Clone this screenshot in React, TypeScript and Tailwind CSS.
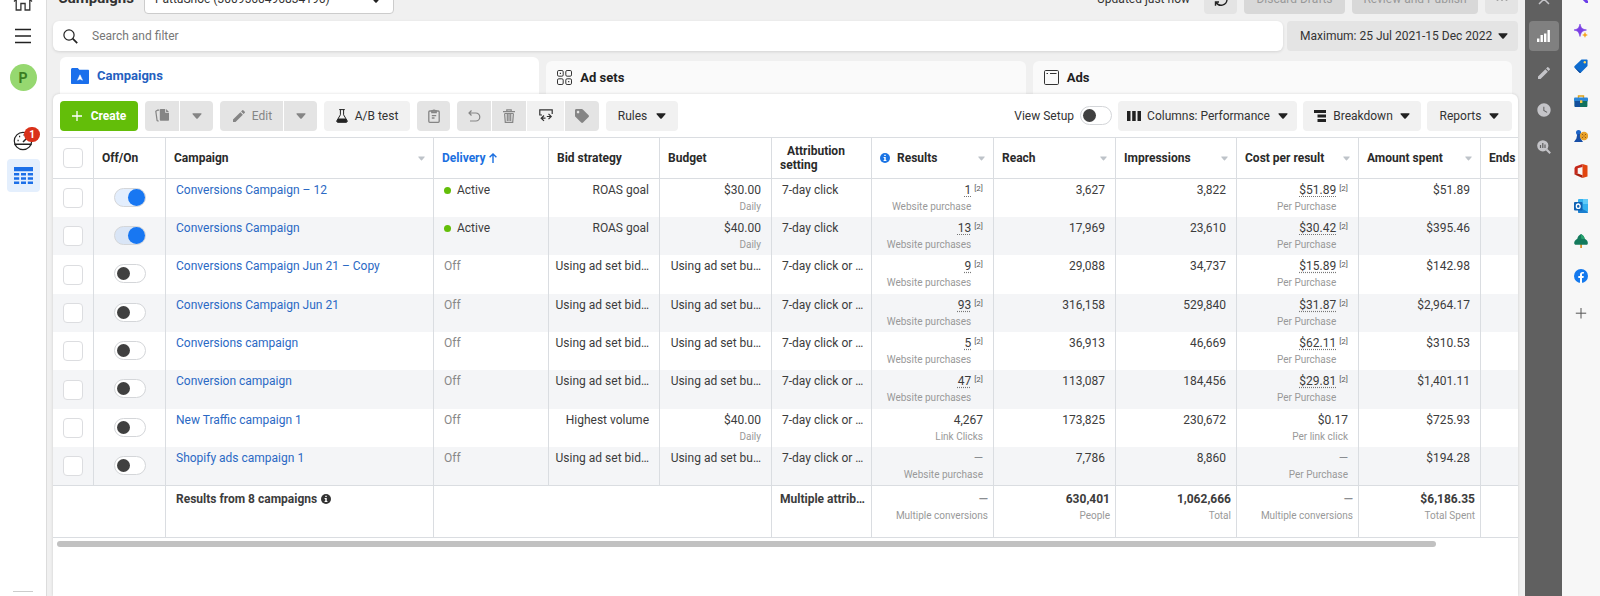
import { useState, type ReactNode } from 'react';
import { clsx } from 'clsx';
import { MdEdit, MdWatchLater } from 'react-icons/md';
import { FaTag } from 'react-icons/fa';

type CampaignRow = {
    id: number;
    name: string;
    active: boolean;
    bid: string;
    budget: string;
    budgetNote?: string;
    attribution: string;
    results: string;
    resultsNote: string;
    reach: string;
    impressions: string;
    cost: string;
    costNote: string;
    spent: string;
    footnote: boolean;
};

const BID = 'Using ad set bid…';
const BUDGET = 'Using ad set bu…';
const CLICK = '7-day click or …';

const CAMPAIGNS: CampaignRow[] = [
    { id: 1, name: 'Conversions Campaign – 12', active: true, bid: 'ROAS goal', budget: '$30.00', budgetNote: 'Daily', attribution: '7-day click', results: '1', resultsNote: 'Website purchase', reach: '3,627', impressions: '3,822', cost: '$51.89', costNote: 'Per Purchase', spent: '$51.89', footnote: true },
    { id: 2, name: 'Conversions Campaign', active: true, bid: 'ROAS goal', budget: '$40.00', budgetNote: 'Daily', attribution: '7-day click', results: '13', resultsNote: 'Website purchases', reach: '17,969', impressions: '23,610', cost: '$30.42', costNote: 'Per Purchase', spent: '$395.46', footnote: true },
    { id: 3, name: 'Conversions Campaign Jun 21 – Copy', active: false, bid: BID, budget: BUDGET, attribution: CLICK, results: '9', resultsNote: 'Website purchases', reach: '29,088', impressions: '34,737', cost: '$15.89', costNote: 'Per Purchase', spent: '$142.98', footnote: true },
    { id: 4, name: 'Conversions Campaign Jun 21', active: false, bid: BID, budget: BUDGET, attribution: CLICK, results: '93', resultsNote: 'Website purchases', reach: '316,158', impressions: '529,840', cost: '$31.87', costNote: 'Per Purchase', spent: '$2,964.17', footnote: true },
    { id: 5, name: 'Conversions campaign', active: false, bid: BID, budget: BUDGET, attribution: CLICK, results: '5', resultsNote: 'Website purchases', reach: '36,913', impressions: '46,669', cost: '$62.11', costNote: 'Per Purchase', spent: '$310.53', footnote: true },
    { id: 6, name: 'Conversion campaign', active: false, bid: BID, budget: BUDGET, attribution: CLICK, results: '47', resultsNote: 'Website purchases', reach: '113,087', impressions: '184,456', cost: '$29.81', costNote: 'Per Purchase', spent: '$1,401.11', footnote: true },
    { id: 7, name: 'New Traffic campaign 1', active: false, bid: 'Highest volume', budget: '$40.00', budgetNote: 'Daily', attribution: CLICK, results: '4,267', resultsNote: 'Link Clicks', reach: '173,825', impressions: '230,672', cost: '$0.17', costNote: 'Per link click', spent: '$725.93', footnote: false },
    { id: 8, name: 'Shopify ads campaign 1', active: false, bid: BID, budget: BUDGET, attribution: CLICK, results: '—', resultsNote: 'Website purchase', reach: '7,786', impressions: '8,860', cost: '—', costNote: 'Per Purchase', spent: '$194.28', footnote: false },
];

function Caret({ small, className }: { small?: boolean; className?: string }) {
    return (
        <svg
            viewBox="0 0 10 6"
            className={clsx('shrink-0', small ? 'h-[5px] w-[7px]' : 'h-[6px] w-[10px]', className)}
            fill="currentColor"
            aria-hidden="true"
        >
            <path d="M1 .3h8c.6 0 .8.6.4 1L5.7 5.4a1 1 0 0 1-1.4 0L.6 1.3C.2.9.4.3 1 .3z" />
        </svg>
    );
}

function InfoIcon({ className }: { className?: string }) {
    return (
        <svg viewBox="0 0 12 12" className={clsx('h-[10px] w-[10px] shrink-0', className)} aria-hidden="true">
            <circle cx="6" cy="6" r="6" fill="currentColor" />
            <path d="M5.1 2h1.8v1.6H5.1zM4.3 4.7h2.6v3.6h.8v1.2H4.3V8.3h.8V5.9h-.8z" fill="#fff" />
        </svg>
    );
}

function Switch({ on, label, onChange }: { on: boolean; label: string; onChange: () => void }) {
    return (
        <input
            type="checkbox"
            role="switch"
            aria-label={label}
            checked={on}
            onChange={onChange}
            className={clsx(
                "flex h-[19px] w-8 shrink-0 appearance-none items-center rounded-full border border-[#d4d6d9] before:rounded-full before:content-['']",
                on
                    ? 'justify-end bg-[#1877f2]/12 before:size-[17px] before:bg-[#1877f2]'
                    : 'justify-start bg-white pl-[2px] before:size-[13px] before:bg-[#404040]'
            )}
        />
    );
}

function Tick({ label }: { label: string }) {
    return (
        <input
            type="checkbox"
            aria-label={label}
            className="mx-auto block size-5 appearance-none rounded border border-[#dcdde0] bg-white checked:border-[#1877f2] checked:bg-[#1877f2]"
        />
    );
}

function ToolButton({ className, muted, label, children }: { className?: string; muted?: boolean; label?: string; children: ReactNode }) {
    return (
        <button
            type="button"
            aria-label={label}
            className={clsx(
                'flex h-[30px] items-center justify-center whitespace-nowrap',
                muted ? 'bg-[#e4e4e4] text-[#858585]' : 'bg-[#f1f1f1] text-[#333]',
                className
            )}
        >
            {children}
        </button>
    );
}

function HeadCell({ children, sortable, className }: { children: ReactNode; sortable?: boolean; className?: string }) {
    return (
        <th scope="col" className={clsx('h-[41px] border-r border-b border-[#dadde1] px-2 text-left font-bold', className)}>
            <div className="flex items-center justify-between">
                <span className="flex items-center">{children}</span>
                {sortable && <Caret small className="text-[#bec3c9]" />}
            </div>
        </th>
    );
}

function Metric({ value, note, footnote }: { value: string; note?: string; footnote?: boolean }) {
    return (
        <div className="flex justify-end gap-[3px]">
            <div className="text-right whitespace-nowrap">
                <p className={clsx(footnote && 'underline decoration-[#777] decoration-dotted underline-offset-2', value === '—' && 'text-[#8a8d91]')}>
                    {value}
                </p>
                {note && <p className="mt-[3px] text-[10px] font-normal text-[#999]">{note}</p>}
            </div>
            {footnote && <span className="text-[8px] leading-[12px] text-[#555]">[2]</span>}
        </div>
    );
}

function LeftNav() {
    return (
        <nav className="-mt-2 flex w-[47px] shrink-0 flex-col items-center border-r border-[#dcdcdc] bg-white">
            <a href="#home" aria-label="Home">
                <svg viewBox="0 0 20 20" className="size-5" fill="none" stroke="#333" strokeWidth="1.3">
                    <path d="M1 9.5 10 1l9 8.5M3.2 8v10h4.7v-6.5h4.2V18h4.7V8" />
                </svg>
            </a>
            <button type="button" aria-label="All tools" className="mt-[14px]">
                <svg viewBox="0 0 16 20" className="h-5 w-4" stroke="#222" strokeWidth="1.6">
                    <path d="M0 3.5h16M0 10h16M0 16.5h16" />
                </svg>
            </button>
            <button type="button" className="mt-[18px] size-[27px] rounded-full bg-[#96d870] text-sm font-bold text-[#3a7d22]">
                P
            </button>
            <button type="button" aria-label="Account notices" className="relative mt-[39px] flex size-[22px] items-center justify-center">
                <svg viewBox="0 0 20 20" className="size-5" fill="none" stroke="#222" strokeWidth="1.2">
                    <circle cx="10" cy="10" r="8.7" />
                    <path d="M1.5 13.2h17M10 11l4-4" strokeWidth="1.5" />
                    <path d="M4.5 9.5h1.2M6 5.5h1.2M10.5 4h1.2" strokeWidth="1.5" />
                </svg>
                <span className="absolute -top-[3px] left-3 flex h-[15px] w-4 items-center justify-center rounded-full bg-[#d9311a] text-[10px] font-bold text-white">
                    1
                </span>
            </button>
            <a href="#ads-manager" aria-label="Ads Manager" className="mt-[7px] flex size-[33px] items-center justify-center rounded bg-[#e4effd]">
                <svg viewBox="0 0 19 17" className="h-[17px] w-[19px]" fill="#1b6fe8">
                    <path d="M0 0h19v4.3H0zM0 6h5.2v2.5H0zM7 6h5v2.5H7zM13.8 6H19v2.5h-5.2zM0 10.2h5.2v2.5H0zM7 10.2h5v2.5H7zM13.8 10.2H19v2.5h-5.2zM0 14.4h5.2v2.5H0zM7 14.4h5v2.5H7zM13.8 14.4H19v2.5h-5.2z" />
                </svg>
            </a>
            <div className="mt-auto mb-1 h-px w-5 bg-[#ccc]" />
        </nav>
    );
}

function TopBar() {
    return (
        <header className="-mt-4 flex h-[30px] items-center">
            <h1 className="pl-[5px] text-[15px] font-bold text-[#333]">Campaigns</h1>
            <div className="relative ml-[10px] w-[250px]">
                <select aria-label="Ad account" className="h-[30px] w-full appearance-none rounded border border-[#ccc] bg-white pl-[10px] text-[#333]">
                    <option>PattuShoe (3009560496834196)</option>
                </select>
                <Caret className="pointer-events-none absolute top-[13px] right-[13px] text-[#222]" />
            </div>
            <span className="mr-[14px] ml-auto text-[#333]">Updated just now</span>
            <button type="button" aria-label="Refresh" className="flex h-[30px] w-[33px] items-center justify-center rounded bg-[#e4e4e4]">
                <svg viewBox="0 0 16 16" className="size-4" fill="none" stroke="#222" strokeWidth="1.4">
                    <path d="M2 7a6 6 0 0 1 11-2.5M14 9a6 6 0 0 1-11 2.5M13.5 1.5v3.5H10M2.5 14.8V11H6" />
                </svg>
            </button>
            <button type="button" disabled className="ml-[7px] h-[30px] w-[101px] rounded bg-[#d8d8d8] text-[#999]">
                Discard Drafts
            </button>
            <button type="button" disabled className="ml-[7px] h-[30px] w-[126px] rounded bg-[#d8d8d8] text-[#999]">
                Review and Publish
            </button>
            <button type="button" aria-label="More" className="ml-[7px] flex h-[30px] w-[33px] items-center justify-center rounded bg-[#e4e4e4]">
                <svg viewBox="0 0 12 3" className="h-[3px] w-3" fill="#888">
                    <circle cx="1.5" cy="1.5" r="1.2" />
                    <circle cx="6" cy="1.5" r="1.2" />
                    <circle cx="10.5" cy="1.5" r="1.2" />
                </svg>
            </button>
        </header>
    );
}

function SearchRow() {
    return (
        <div className="mt-[7px] flex gap-1">
            <label className="flex h-[30px] flex-1 items-center rounded-md bg-white pl-[10px] shadow-[0_1px_3px_rgba(0,0,0,0.12)]">
                <svg viewBox="0 0 15 15" className="size-[15px]" fill="none" stroke="#222" strokeWidth="1.2">
                    <circle cx="6" cy="6" r="5.1" />
                    <path d="m9.7 9.7 4.5 4.5" strokeWidth="1.7" />
                </svg>
                <input type="text" aria-label="Search and filter" placeholder="Search and filter" className="ml-[14px] flex-1 outline-none placeholder:text-[#777]" />
            </label>
            <button type="button" className="flex h-[30px] w-[231px] items-center justify-between rounded bg-[#e4e4e4] pr-[10px] pl-[13px] text-[#333]">
                Maximum: 25 Jul 2021-15 Dec 2022
                <Caret className="text-[#222]" />
            </button>
        </div>
    );
}

function LevelTabs() {
    const tab = 'flex flex-1 items-center rounded-t-md px-[11px] text-[13px] font-bold';
    return (
        <div role="tablist" className="mt-[6px] flex h-[37px] items-end gap-[7px] pr-[6px] pl-[7px]">
            <button type="button" role="tab" aria-selected="true" className={clsx(tab, 'h-[37px] bg-white text-[#2460bf]')}>
                <svg viewBox="0 0 18 16" className="mr-2 h-4 w-[18px]">
                    <path d="M1.5 0h5.3l1.5 1.7H17c.6 0 1 .4 1 1V15c0 .6-.4 1-1 1H1c-.6 0-1-.4-1-1V1.5C0 .7.7 0 1.5 0z" fill="#1a6fec" />
                    <path d="m9 6.8 2.500 5.400L9 11.100l-2.500 1.100z" fill="#fff" stroke="#fff" strokeWidth=".5" />
                </svg>
                Campaigns
            </button>
            <button type="button" role="tab" aria-selected="false" className={clsx(tab, 'h-[33px] bg-[#fafafa] text-[#222]')}>
                <svg viewBox="0 0 15 15" className="mr-2 size-[15px]" fill="none" stroke="#333" strokeWidth="1">
                    <rect x=".5" y=".5" width="5.7" height="5.7" rx="1.3" />
                    <rect x="8.8" y=".5" width="5.7" height="5.7" rx="1.3" />
                    <rect x=".5" y="8.8" width="5.7" height="5.7" rx="1.3" />
                    <rect x="8.8" y="8.8" width="5.7" height="5.7" rx="1.3" />
                    <path d="M2.8 3.4H4M11.1 11.7h1.2" strokeWidth="1.3" />
                </svg>
                Ad sets
            </button>
            <button type="button" role="tab" aria-selected="false" className={clsx(tab, 'h-[33px] bg-[#fafafa] text-[#222]')}>
                <svg viewBox="0 0 15 15" className="mr-2 size-[15px]" fill="none" stroke="#333" strokeWidth="1">
                    <rect x=".5" y=".5" width="14" height="14" rx="1.2" />
                    <path d="M2.500 3.500H4M6 3.500h6.500" />
                </svg>
                Ads
            </button>
        </div>
    );
}

function Toolbar() {
    const [setup, setSetup] = useState(false);
    return (
        <div className="flex h-[43px] items-center justify-between pr-[6px] pl-[7px]">
            <div className="flex gap-[7px]">
                <button type="button" className="flex h-[30px] w-[78px] items-center justify-center gap-[9px] rounded bg-[#63be09] font-bold text-white">
                    <svg viewBox="0 0 10 10" className="size-[10px]" stroke="#fff" strokeWidth="1.3">
                        <path d="M5 0v10M0 5h10" />
                    </svg>
                    Create
                </button>
                <div className="flex gap-px">
                    <ToolButton muted label="Duplicate" className="w-[34px] rounded-l">
                        <svg viewBox="0 0 14 13" className="h-[13px] w-[14px]">
                            <path d="M4.2 1.2H2.6L.8 2.200l1.300 9.300 1.500.8" fill="none" stroke="currentColor" strokeWidth="1.2" />
                            <path d="M5.8 0h4.4v3.8H14v7c0 .6-.4 1-1 1H5.800c-.5 0-1-.4-1-1V1c0-.6.5-1 1-1zM11.100 0 14 2.900h-2.900z" fill="currentColor" />
                        </svg>
                    </ToolButton>
                    <ToolButton muted label="Duplicate options" className="w-[33px] rounded-r">
                        <Caret />
                    </ToolButton>
                </div>
                <div className="flex gap-px">
                    <ToolButton muted className="w-[63px] gap-[5px] rounded-l">
                        <MdEdit className="size-4" />
                        Edit
                    </ToolButton>
                    <ToolButton muted label="Edit options" className="w-[33px] rounded-r">
                        <Caret />
                    </ToolButton>
                </div>
                <ToolButton className="w-[86px] gap-[7px] rounded">
                    <svg viewBox="0 0 12 14" className="h-[14px] w-3">
                        <path d="M3.2.6h5.6M4.4.6v5.200L.9 11.700c-.4.8 0 1.600.9 1.600h8.400c.9 0 1.300-.8.9-1.600L7.600 5.800V.6" fill="none" stroke="#222" strokeWidth="1" />
                        <path d="M2.200 9.400h7.600l1.500 2.700-.7 1.200H1.400l-.7-1.200z" fill="#222" />
                    </svg>
                    A/B test
                </ToolButton>
                <ToolButton muted label="Paste" className="w-[33px] rounded">
                    <svg viewBox="0 0 12 14" className="h-[14px] w-3" fill="none" stroke="currentColor" strokeWidth="1.3">
                        <rect x=".8" y="2" width="10.4" height="11.3" rx="1" />
                        <path d="M3.8 3.5V1.900h1.100C5 .9 7 .9 7.100 1.900h1.100v1.600zM3.800 6.600h4.400M3.800 9h2.700" />
                    </svg>
                </ToolButton>
                <div className="flex gap-px">
                    <ToolButton muted label="Undo" className="w-[34px] rounded-l">
                        <svg viewBox="0 0 13 12" className="h-3 w-[13px]" fill="none" stroke="currentColor" strokeWidth="1.2">
                            <path d="M3.5.5 1 3l2.500 2.500M1 3h6.800a4 4 0 0 1 0 8H2" />
                        </svg>
                    </ToolButton>
                    <ToolButton muted label="Delete" className="w-[34px]">
                        <svg viewBox="0 0 12 14" className="h-[14px] w-3" fill="none" stroke="currentColor" strokeWidth="1.2">
                            <path d="M0 2.600h12M3.800 2.500V.8h4.400v1.700M1.600 4.800l.7 8.500h7.400l.7-8.500M4.300 4.500v7.500M6 4.500v7.500M7.700 4.500v7.500M1.500 4.500h9" />
                        </svg>
                    </ToolButton>
                    <ToolButton label="Export and import" className="w-[37px]">
                        <svg viewBox="0 0 14 13" className="h-[13px] w-[14px]" fill="none" stroke="#333" strokeWidth="1.2">
                            <path d="M3 6H.8V.8h12.400V5M5 6.500 2.200 9.200 5 11.900M2.200 9.200h4.300M9.500 4.800l2.700 2.700-2.700 2.700M12.200 7.500H7.800" />
                        </svg>
                    </ToolButton>
                    <ToolButton muted label="Tags" className="w-[34px] rounded-r">
                        <FaTag className="size-[14px]" />
                    </ToolButton>
                </div>
                <ToolButton className="w-[72px] gap-[9px] rounded">
                    Rules
                    <Caret className="text-[#222]" />
                </ToolButton>
            </div>
            <div className="flex items-center gap-[6px]">
                <span className="text-[#333]">View Setup</span>
                <Switch on={setup} label="View Setup" onChange={() => setSetup(!setup)} />
                <ToolButton className="w-[179px] gap-[6px] rounded">
                    <svg viewBox="0 0 14 10" className="h-[10px] w-[14px]" fill="#222">
                        <path d="M0 0h3.500v10H0zM5.200 0h3.500v10H5.200zM10.500 0H14v10h-3.500z" />
                    </svg>
                    Columns: Performance
                    <Caret className="ml-[2px] text-[#222]" />
                </ToolButton>
                <ToolButton className="w-[118px] gap-[7px] rounded">
                    <svg viewBox="0 0 12 12" className="size-3" fill="#222">
                        <path d="M0 0h12v3H0zM3.500 4.500H12v3H3.500zM3.500 9H12v3H3.500z" />
                    </svg>
                    Breakdown
                    <Caret className="text-[#222]" />
                </ToolButton>
                <ToolButton className="w-[85px] gap-2 rounded">
                    Reports
                    <Caret className="text-[#222]" />
                </ToolButton>
            </div>
        </div>
    );
}

function CampaignTable() {
    const [enabled, setEnabled] = useState<number[]>(() => CAMPAIGNS.filter((c) => c.active).map((c) => c.id));

    const toggle = (id: number) => {
        setEnabled((prev) => (prev.includes(id) ? prev.filter((i) => i !== id) : [...prev, id]));
    };

    const cell = 'border-r border-[#dadde1] px-[10px] pt-1 align-top';
    const total = 'h-[53px] border-t border-r border-b border-[#dadde1] pt-[6px] pr-[5px] align-top font-bold';

    return (
        <table className="w-full table-fixed border-separate border-spacing-0 border-t border-[#dadde1] leading-[14px] text-[#3c3c3c]">
            <colgroup>
                <col className="w-[41px]" />
                <col className="w-[72px]" />
                <col className="w-[268px]" />
                <col className="w-[115px]" />
                <col className="w-[111px]" />
                <col className="w-[112px]" />
                <col className="w-[100px]" />
                <col className="w-[122px]" />
                <col className="w-[122px]" />
                <col className="w-[121px]" />
                <col className="w-[122px]" />
                <col className="w-[122px]" />
                <col />
            </colgroup>
            <thead className="text-[#2a2a2a]">
                <tr>
                    <th scope="col" className="border-r border-b border-[#dadde1]">
                        <Tick label="Select all campaigns" />
                    </th>
                    <HeadCell>Off/On</HeadCell>
                    <HeadCell sortable>Campaign</HeadCell>
                    <HeadCell className="text-[#1b6fe0]">
                        Delivery
                        <svg viewBox="0 0 8 10" className="ml-[3px] h-[10px] w-2" fill="none" stroke="currentColor" strokeWidth="1.4">
                            <path d="M4 10V1M.6 4.300 4 1l3.400 3.300" />
                        </svg>
                    </HeadCell>
                    <HeadCell>Bid strategy</HeadCell>
                    <HeadCell>Budget</HeadCell>
                    <th scope="col" className="border-r border-b border-[#dadde1] pl-2 text-left indent-[7px] font-bold">
                        Attribution setting
                    </th>
                    <HeadCell sortable>
                        <InfoIcon className="mr-[7px] text-[#1b74e4]" />
                        Results
                    </HeadCell>
                    <HeadCell sortable>Reach</HeadCell>
                    <HeadCell sortable>Impressions</HeadCell>
                    <HeadCell sortable>Cost per result</HeadCell>
                    <HeadCell sortable>Amount spent</HeadCell>
                    <th scope="col" className="border-b border-[#dadde1] pl-2 text-left font-bold">Ends</th>
                </tr>
            </thead>
            <tbody>
                {CAMPAIGNS.map((c) => (
                    <tr key={c.id} className="h-[38px] even:bg-[#f4f5f7] nth-[3n]:h-[39px]">
                        <td className="border-r border-[#dadde1]">
                            <Tick label={`Select ${c.name}`} />
                        </td>
                        <td className="border-r border-[#dadde1] pb-[2px] pl-5">
                            <Switch on={enabled.includes(c.id)} label={`Turn ${c.name} on or off`} onChange={() => toggle(c.id)} />
                        </td>
                        <td className={cell}>
                            <a href={`#campaign-${c.id}`} className="text-[#2b69c4]">{c.name}</a>
                        </td>
                        <td className={clsx(cell, !c.active && 'text-[#888]')}>
                            <span className="flex items-center">
                                {c.active && <span className="mr-[6px] size-[7px] rounded-full bg-[#63be09]" />}
                                {c.active ? 'Active' : 'Off'}
                            </span>
                        </td>
                        <td className={cell}><Metric value={c.bid} /></td>
                        <td className={cell}><Metric value={c.budget} note={c.budgetNote} /></td>
                        <td className={clsx(cell, 'whitespace-nowrap')}>{c.attribution}</td>
                        <td className={cell}><Metric value={c.results} note={c.resultsNote} footnote={c.footnote} /></td>
                        <td className={cell}><Metric value={c.reach} /></td>
                        <td className={cell}><Metric value={c.impressions} /></td>
                        <td className={cell}><Metric value={c.cost} note={c.costNote} footnote={c.footnote} /></td>
                        <td className={cell}><Metric value={c.spent} /></td>
                        <td />
                    </tr>
                ))}
            </tbody>
            <tfoot>
                <tr>
                    <td colSpan={2} className={total} />
                    <td className={clsx(total, 'pl-[10px]')}>
                        <span className="flex items-center gap-1">
                            Results from 8 campaigns
                            <InfoIcon className="text-[#333]" />
                        </span>
                    </td>
                    <td colSpan={3} className={total} />
                    <td className={clsx(total, 'pl-2 whitespace-nowrap')}>Multiple attrib…</td>
                    <td className={total}><Metric value="—" note="Multiple conversions" /></td>
                    <td className={total}><Metric value="630,401" note="People" /></td>
                    <td className={total}><Metric value="1,062,666" note="Total" /></td>
                    <td className={total}><Metric value="—" note="Multiple conversions" /></td>
                    <td className={total}><Metric value="$6,186.35" note="Total Spent" /></td>
                    <td className="border-t border-b border-[#dadde1]" />
                </tr>
            </tfoot>
        </table>
    );
}

function InsightsRail() {
    const item = 'flex size-[30px] items-center justify-center rounded text-[#c4c4c8]';
    return (
        <aside className="-mt-4 flex w-[37px] shrink-0 flex-col items-center gap-[7px] bg-[#606060]">
            <button type="button" aria-label="Close" className={item}>
                <svg viewBox="0 0 12 12" className="size-3" stroke="currentColor" strokeWidth="1.5">
                    <path d="m1 1 10 10M11 1 1 11" />
                </svg>
            </button>
            <button type="button" aria-label="Charts" className={clsx(item, 'bg-[#808080]')}>
                <svg viewBox="0 0 13 12" className="h-3 w-[13px]" fill="#fff">
                    <path d="M0 8.500h2.400V12H0zM3.500 5h2.400v7H3.500zM7 3.500h2.400V12H7zM10.500 0h2.400v12h-2.400z" />
                </svg>
            </button>
            <button type="button" aria-label="Edit" className={item}>
                <MdEdit className="size-4" />
            </button>
            <button type="button" aria-label="History" className={item}>
                <MdWatchLater className="size-4" />
            </button>
            <button type="button" aria-label="Inspect" className={item}>
                <svg viewBox="0 0 14 14" className="size-[14px]">
                    <circle cx="5.8" cy="5.8" r="5.6" fill="currentColor" />
                    <path d="m9.5 9.5 3.700 3.700" stroke="currentColor" strokeWidth="2" />
                    <path d="M3.500 5v3M5.800 3v5M8 4.500V8" stroke="#606060" strokeWidth="1.2" />
                </svg>
            </button>
        </aside>
    );
}

const EDGE_ITEMS: { label: string; art: ReactNode }[] = [
    { label: 'Search', art: <path d="m9 9 4 4" stroke="#6a3de8" strokeWidth="3" strokeLinecap="round" /> },
    {
        label: 'Discover',
        art: (
            <>
                <path d="M6 0c1.200 4 1.900 5 6.500 6-4.600 1-5.300 2.200-6.500 6.500C4.800 8.200 4.200 7 0 6c4.200-1 4.800-2 6-6z" fill="#7b3fe4" stroke="#7b3fe4" strokeWidth=".6" />
                <path d="M11 7.800c.6 2.200 1 2.700 3 3.200-2 .5-2.400 1-3 3-.6-2-1-2.500-3-3 2-.5 2.400-1 3-3.200z" fill="#f5a623" />
            </>
        ),
    },
    {
        label: 'Shopping',
        art: (
            <>
                <path d="M7.5.5h5.300c.5 0 .8.4.8.8L13.500 7 7 13.500c-.5.5-1.200.5-1.700 0L.6 8.700c-.5-.5-.5-1.200 0-1.700z" fill="#0f6cce" />
                <path d="M.4 8.200 7 13.500c-.5.5-1.200.5-1.700 0z" fill="#0b3f8f" />
                <circle cx="10.800" cy="3.300" r="1.200" fill="#ffd75e" />
            </>
        ),
    },
    {
        label: 'Tools',
        art: (
            <>
                <path d="M4.500 4V2h5v2" fill="none" stroke="#e0a31a" strokeWidth="1.4" />
                <rect y="3.500" width="14" height="4" rx="1" fill="#2a86d8" />
                <path d="M.6 7h12.800v5c0 .6-.4 1-1 1H1.600c-.6 0-1-.4-1-1z" fill="#10705f" />
                <path d="M.6 7H6v6H1.600c-.6 0-1-.4-1-1z" fill="#134f9c" />
                <rect x="6" y="6.300" width="2.400" height="2.600" rx=".5" fill="#f7c948" />
            </>
        ),
    },
    {
        label: 'Games',
        art: (
            <>
                <circle cx="4.500" cy="3.500" r="2.500" fill="#1c64c8" />
                <path d="M3.300 5h2.600l.8 4.500L9 13H0l2.400-3.500z" fill="#174ea6" />
                <circle cx="10" cy="7" r="4.200" fill="#e8a22b" />
                <path d="M8.200 5.500h.8M11 5.500h.8M8.200 8.500h.8M11 8.500h.8M9.600 7h.8" stroke="#8a4b08" strokeWidth="1.1" />
            </>
        ),
    },
    {
        label: 'Microsoft 365',
        art: (
            <>
                <path d="M8.500 0 13.500 1.600v10.800L8.500 14z" fill="#e2450f" />
                <path d="M8.500 0 1.500 2.600.5 4v6.500l3.200-1V4.300l4.800-1.400z" fill="#c4281a" />
                <path d="M.5 10.500 8.500 14v-2.800l-4.800-1.700z" fill="#a8200d" />
            </>
        ),
    },
    {
        label: 'Outlook',
        art: (
            <>
                <rect x="4" y="0" width="10" height="13" rx="1" fill="#35b1ef" />
                <path d="M9 0h4c.6 0 1 .4 1 1v4H9z" fill="#62cbf8" />
                <path d="M4 7.500 14 13c0 .6-.4 1-1 1H5c-.6 0-1-.4-1-1z" fill="#1a7fd0" />
                <rect y="3" width="8.500" height="8.500" rx="1" fill="#0f62b4" />
                <ellipse cx="4.250" cy="7.200" rx="1.900" ry="2.200" fill="none" stroke="#fff" strokeWidth="1.3" />
            </>
        ),
    },
    {
        label: 'Drop',
        art: (
            <>
                <path d="M6.200 10h1.800v4H6.200z" fill="#d9922b" />
                <path d="M7 0c2 1 3.500 3 3.700 4.700C13 6 14 7.500 13.800 9.300c0 1-.6 1.500-1.500 1.500H1.900c-.9 0-1.700-.6-1.700-1.500C0 7.500 1.300 6 3.300 4.700 3.500 3 5 1 7 0z" fill="#147a5c" />
                <path d="M7 0c2 1 3.500 3 3.700 4.700-2 .8-3.700.3-3.700-1z" fill="#27a36f" />
            </>
        ),
    },
    {
        label: 'Facebook',
        art: (
            <>
                <circle cx="7" cy="7" r="7" fill="#1479ee" />
                <path d="M6 14V9H4.300V7H6V5.600c0-1.800 1-2.700 2.600-2.700.7 0 1.300.1 1.300.1v1.600h-.8c-.8 0-1.100.5-1.100 1V7h1.800l-.3 2H8v5z" fill="#fff" />
            </>
        ),
    },
    { label: 'Add', art: <path d="M7 2v10.500M1.800 7.200h10.400" stroke="#555" strokeWidth="1" /> },
];

function EdgeSidebar() {
    return (
        <aside className="-mt-[22px] flex w-[38px] shrink-0 flex-col items-center bg-[#f7f7f7]">
            {EDGE_ITEMS.map((item) => (
                <button key={item.label} type="button" aria-label={item.label} className="flex h-[35px] w-full items-center justify-center last:mt-[2px]">
                    <svg viewBox="0 0 14 14" className="size-[14px]" fill="none">
                        {item.art}
                    </svg>
                </button>
            ))}
        </aside>
    );
}

export default function App() {
    return (
        <div className="flex min-h-screen overflow-hidden bg-[#f0f0f0] font-['Roboto',sans-serif] text-xs">
            <LeftNav />
            <main className="flex min-w-0 flex-1 flex-col pr-[7px] pl-[6px]">
                <TopBar />
                <SearchRow />
                <LevelTabs />
                <section className="flex-1 overflow-hidden rounded-t-md bg-white shadow-[0_0_3px_rgba(0,0,0,0.15)]">
                    <Toolbar />
                    <CampaignTable />
                    <div className="mt-[3px] mr-[82px] ml-1 h-[6px] rounded-full bg-[#c1c1c1]" />
                </section>
            </main>
            <InsightsRail />
            <EdgeSidebar />
        </div>
    );
}
